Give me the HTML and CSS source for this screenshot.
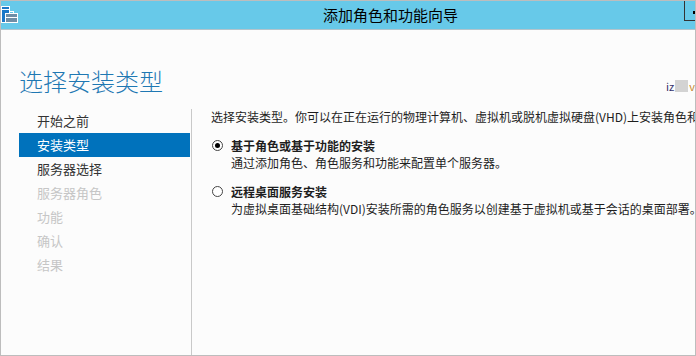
FILE: index.html
```html
<!DOCTYPE html>
<html lang="zh-CN">
<head>
<meta charset="utf-8">
<title>添加角色和功能向导</title>
<link rel="stylesheet" href="styles.css">
</head>
<body>
<div class="window">
	<div class="titlebar">
		<svg class="appicon" width="17" height="18" viewBox="0 0 17 18">
			<rect x="0.5" y="0.5" width="8" height="16" fill="#1b78c8" stroke="#fff"/>
			<rect x="1" y="3" width="7" height="1" fill="#fff"/>
			<rect x="4.5" y="7.5" width="12" height="9" fill="#6f8ea6" stroke="#fff"/>
			<rect x="8.5" y="5.5" width="4" height="2" fill="none" stroke="#fff"/>
			<rect x="5" y="11" width="11" height="1" fill="#fff"/>
		</svg>
		<div class="title">添加角色和功能向导</div>
		<div class="winbtn"><span></span></div>
	</div>

	<div class="header">
		<h1>选择安装类型</h1>
		<div class="server">iz<span class="blur"></span><span class="tail">v</span></div>
	</div>

	<div class="main">
		<ul class="steps">
			<li>开始之前</li>
			<li class="active">安装类型</li>
			<li>服务器选择</li>
			<li class="off">服务器角色</li>
			<li class="off">功能</li>
			<li class="off">确认</li>
			<li class="off">结果</li>
		</ul>
		<div class="content">
			<p class="intro">选择安装类型。你可以在正在运行的物理计算机、虚拟机或脱机虚拟硬盘(VHD)上安装角色和功能。</p>
			<div class="option">
				<span class="radio checked"></span>
				<div class="label">基于角色或基于功能的安装</div>
				<div class="desc">通过添加角色、角色服务和功能来配置单个服务器。</div>
			</div>
			<div class="option second">
				<span class="radio"></span>
				<div class="label">远程桌面服务安装</div>
				<div class="desc">为虚拟桌面基础结构(VDI)安装所需的角色服务以创建基于虚拟机或基于会话的桌面部署。</div>
			</div>
		</div>
	</div>
</div>
</body>
</html>
```

FILE: styles.css
```css
*{ margin:0; padding:0; box-sizing:border-box;}
li{ list-style:none;}
body{ background:#fff; font-family:"Noto Sans CJK SC","Liberation Sans",sans-serif; color:#1e1e1e;}

.window{ width:696px; height:356px; border:1px solid #bdbdbd; background:#fcfcfc; display:flex; flex-direction:column; overflow:hidden;}

.titlebar{ height:29px; flex:none; background:#67c9e9; border-bottom:1px solid #b3c4cc; display:flex; align-items:flex-start;}
.appicon{ display:block; margin-top:5px; flex:none;}
.title{ flex:1; padding-left:305px; font-size:15px; line-height:28px; color:#000; white-space:nowrap;}
.winbtn{ width:11px; height:20px; flex:none; border-left:1px solid #333; border-bottom:1px solid #333; position:relative;}
.winbtn span{ position:absolute; left:8px; top:10px; width:3px; height:3px; background:#000;}

.header{ flex:none; display:flex; justify-content:space-between; align-items:center; padding:23px 0 0 18px; height:78px;}
.header h1{ font-size:24px; font-weight:300; line-height:32px; color:#1f78b3;}
.server{ font-size:11px; line-height:14px; color:#33336b; margin-top:10px; display:flex; align-items:center; white-space:nowrap;}
.server .blur{ width:13px; height:12px; background:#d3d3d3; margin-left:1px;}
.server .tail{ color:#c7882c; margin-left:1px;}

.main{ flex:1; display:flex; min-height:0; margin-top:1px;}
.steps{ width:173px; margin-left:18px; padding-right:1px; border-right:1px solid #c9c9c9; flex:none;}
.steps li{ font-size:13px; line-height:24px; height:24px; padding-left:18px; color:#333;}
.steps li.active{ background:#0072bc; color:#fff;}
.steps li.off{ color:#c6c6c6;}

.content{ flex:1; padding-left:19px; overflow:hidden; font-size:12px;}
.intro{ line-height:18px; white-space:nowrap; margin-top:-1px;}
.option{ display:grid; grid-template-columns:20px auto; margin-top:11px; white-space:nowrap;}
.option.second{ margin-top:12px;}
.option .label{ font-weight:bold; line-height:17px; grid-column:2;}
.option .desc{ line-height:17px; grid-column:2;}
.radio{ grid-column:1; grid-row:1; width:11px; height:11px; margin:3px 0 0 1px; border:1px solid #444; border-radius:50%; background:#fff; position:relative;}
.radio.checked:after{ content:""; position:absolute; left:2px; top:2px; width:5px; height:5px; border-radius:50%; background:#000;}
```
